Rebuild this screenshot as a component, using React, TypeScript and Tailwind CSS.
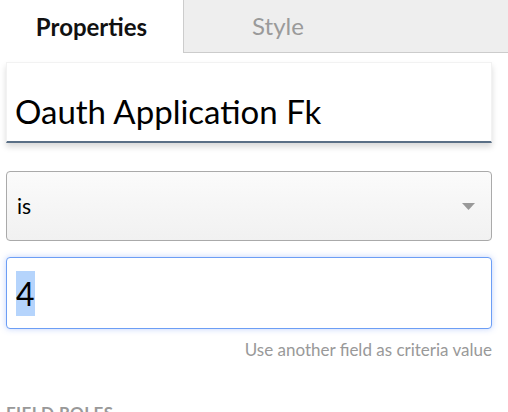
import React from "react";

export default function App() {
  const font = { fontFamily: "Lato, 'Noto Sans', sans-serif" };
  return (
    <div className="w-[508px] h-[412px] overflow-hidden bg-white" style={font}>
      <div className="flex h-[53px]">
        <div className="w-[183px] flex items-center justify-center bg-white">
          <span className="text-[24px] font-bold text-[#111] leading-none">Properties</span>
        </div>
        <div className="flex-1 flex bg-[#eeeeee] border-l border-b border-[#cccccc]">
          <div className="w-[188px] flex items-center justify-center">
            <span className="text-[24px] text-[#9a9a9a] leading-none">Style</span>
          </div>
        </div>
      </div>
      <div className="px-[6px] pr-[16px]">
        <div className="mt-[9px] h-[81px] bg-white border-t border-l border-r border-[#f2f2f2] border-b-2 border-b-[#5a6f86] shadow-[0_4px_6px_rgba(0,0,0,0.15)] flex items-end pb-[13px] pl-[8px]">
          <span className="text-[33px] text-black leading-none">Oauth Application Fk</span>
        </div>
        <div className="mt-[28px] h-[70px] rounded-[4px] border border-[#aaaaaa] bg-gradient-to-b from-[#fbfbfb] to-[#f1f1f1] flex items-center justify-between pl-[10px] pr-[16px]">
          <span className="text-[21px] text-black">is</span>
          <svg width="13" height="7" viewBox="0 0 13 7">
            <polygon points="0,0 13,0 6.5,7" fill="#999999" />
          </svg>
        </div>
        <div className="mt-[16px] h-[72px] rounded-[4px] border border-[#6c9ef5] bg-white shadow-[0_0_6px_rgba(80,130,245,0.35)] flex items-center pl-[9px]">
          <span className="bg-[#b5d4fc] text-[32px] text-black leading-[45px]">4</span>
        </div>
        <div className="mt-[9px] text-right text-[17px] leading-[24px] text-[#999999]">Use another field as criteria value</div>
        <div className="mt-[38px] text-[17px] font-bold text-[#999999] tracking-wide">FIELD ROLES</div>
      </div>
    </div>
  );
}
